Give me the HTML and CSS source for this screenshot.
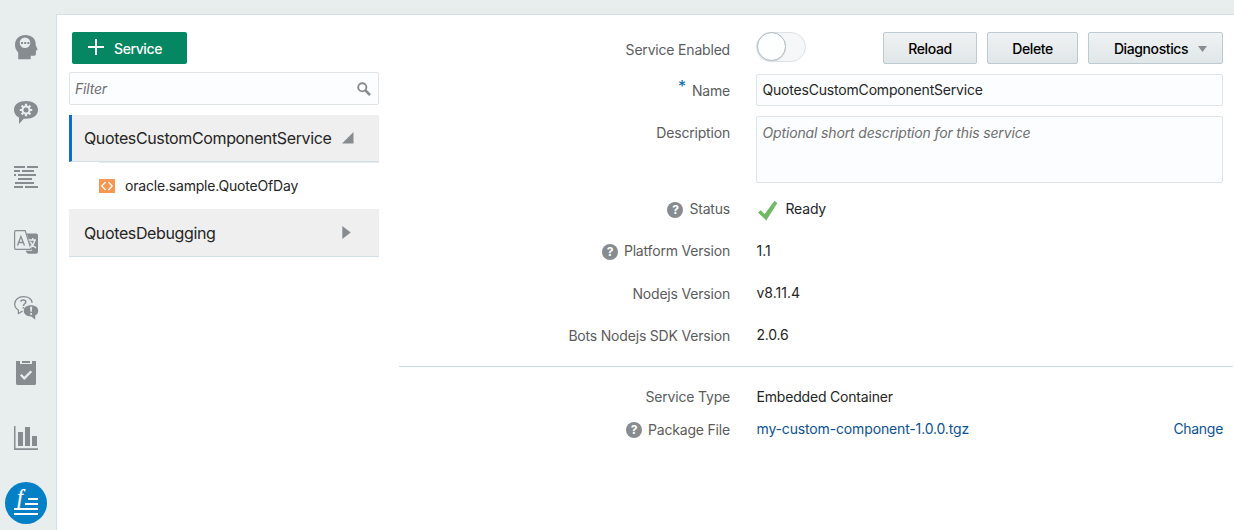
FILE: index.html
```html
<!DOCTYPE html>
<html lang="en">
<head>
<meta charset="utf-8">
<title>Custom Components</title>
<link rel="stylesheet" href="styles.css">
</head>
<body>
<div class="app">
  <nav class="rail">
    <a class="rail-item"><svg width="42" height="42" viewBox="0 0 42 42"><path class="ink" d="M13.2 33.2V26.5C10.8 24 10 21.500 10 18.800C10 12.800 14.500 9 20.300 9C26.500 9 30.700 12.800 30.700 17.800L30.800 19.500L32.500 23.300C32.500 24.200 31.900 24.500 30.900 24.500V27.700C30.900 29.300 30 29.700 28.800 29.700H25.700V33.200Z"/><circle class="bg" cx="20" cy="16.800" r="5.300"/><path class="ink" d="M16 16h2v2h-2zM19.200 16h2v2h-2zM22.400 16h2v2h-2z"/></svg></a>
    <a class="rail-item"><svg width="42" height="42" viewBox="0 0 42 42"><path class="ink" d="M21 10C27.500 10 33 12.800 33 18.800C33 24.800 27.500 27.800 21 27.800H18.700L14 33V26.500C11 25 9 22.500 9 18.800C9 12.800 14.500 10 21 10Z"/><g fill="none" stroke="#e8edee"><circle cx="21" cy="19" r="3.500" stroke-width="2"/><path stroke-width="2.200" d="M21 12.800v2.400M21 22.800v2.400M14.800 19h2.400M24.800 19h2.400M16.600 14.600l1.700 1.700M23.700 21.700l1.700 1.700M25.400 14.600l-1.700 1.700M18.300 21.700l-1.700 1.700"/></g></svg></a>
    <a class="rail-item"><svg width="42" height="42" viewBox="0 0 42 42"><path class="ink" d="M9 10h11v2H9zM22 10h11v2H22zM9 14h6v2H9zM17 14h12v2H17zM9 18h2v2H9zM13 18h18v2H13zM13 22h14v2H13zM10 26h19v2H10zM9 30h9v2H9zM20 30h13v2H20z"/></svg></a>
    <a class="rail-item"><svg width="42" height="42" viewBox="0 0 42 42"><path fill="none" stroke="#878c90" stroke-width="1.200" d="M11 9.600H20.200L26 28.400H11Q9.600 28.400 9.600 27V11Q9.600 9.600 11 9.600Z"/><path fill="none" stroke="#878c90" stroke-width="1.300" d="M12.500 24.500L15.900 15.500L19.500 24.500M13.600 21.500h4.700"/><path class="ink" d="M21.800 12.500H31Q33 12.500 33 14.500V30.700Q33 32.700 31 32.700H23.500Q21.600 32.700 21 30.600L20.700 29.700H27.200Z"/><path fill="none" stroke="#e8edee" stroke-width="1.300" d="M23.800 19H31M27.800 17V19M29.800 19.500C29 23 26.800 25.500 24.800 26.800M25.400 20.500C26.500 23.500 28.500 25.500 31 26.800"/></svg></a>
    <a class="rail-item"><svg width="42" height="42" viewBox="0 1 42 42"><path fill="none" stroke="#878c90" stroke-width="1.250" d="M17.500 25.100L13.400 27.500V24C11 22.700 9.700 20.500 9.700 18C9.700 13.500 13.500 10.700 18.500 10.700C23.500 10.700 26.500 13 27.200 16.800"/><path fill="none" stroke="#878c90" stroke-width="1.500" d="M15.800 15.600C16 13.400 20.800 13.400 20.800 16C20.800 17.900 18.400 17.600 18.400 20"/><path class="ink" d="M17.600 21h1.600v1.600h-1.600zM26 19.200C30.500 19.200 33.200 21.500 33.200 24.700C33.200 27 32 28.700 30.200 29.600V33.700L26.400 30.500C21.500 30.600 18.800 28 18.800 24.800C18.800 21.500 21.500 19.200 26 19.200Z"/><path class="bg" d="M25 20.800h2.200l-.4 5h-1.400zM25.200 27h1.800v1.800h-1.800z"/></svg></a>
    <a class="rail-item"><svg width="42" height="42" viewBox="0 0 42 42"><path class="ink" d="M11 9H15V12H27V9H31V31.500Q31 33 29.500 33H12.500Q11 33 11 31.500ZM17 9h8v2h-8z"/><path fill="none" stroke="#e8edee" stroke-width="2.300" d="M15.800 22.800L19.300 26.300L26.300 19.300"/></svg></a>
    <a class="rail-item"><svg width="42" height="42" viewBox="0 0 42 42"><path class="ink" d="M9 9h1.500v22.200H33V33H9zM13 15h5v14h-5zM20 10h5v19h-5zM27 19h5v10h-5z"/></svg></a>
    <a class="rail-item rail-item-active"><svg width="42" height="42" viewBox="0 0 42 42"><text class="fx" x="12.300" y="21.800">f</text><path fill="#fff" d="M23 16h10v2H23zM20 21h13v2H20zM9 26h24v2H9zM9 31h24v2H9z"/></svg></a>
  </nav>
  <main class="workspace">
    <section class="services">
      <button class="add"><svg width="16" height="16" viewBox="0 0 16 16"><path stroke="#fff" stroke-width="2" d="M8 0v16M0 8h16"/></svg><span>Service</span></button>
      <div class="filter"><em>Filter</em><svg width="14" height="14" viewBox="0 0 14 14"><circle cx="5.300" cy="5.300" r="4.100" fill="none" stroke="#878c90" stroke-width="1.900"/><path stroke="#878c90" stroke-width="2.600" d="M8.400 8.400L13 13"/></svg></div>
      <div class="service service-open"><span>QuotesCustomComponentService</span><svg width="12" height="12" viewBox="0 0 12 12"><path class="ink" d="M11.500 0V11.500H0Z"/></svg></div>
      <div class="component"><svg width="16" height="14" viewBox="0 0 16 14"><rect width="16" height="14" rx=".6" fill="#fb9650"/><path fill="none" stroke="#fff" stroke-width="1.300" d="M6.600 3L2.800 7L6.600 11M9.400 3L13.200 7L9.400 11"/></svg><span>oracle.sample.QuoteOfDay</span></div>
      <div class="service"><span>QuotesDebugging</span><svg class="closed" width="9" height="13" viewBox="0 0 9 13"><path class="ink" d="M.3 0L8.700 6.500L.3 13Z"/></svg></div>
    </section>
    <section class="details">
      <div class="row row-tools"><div class="label"><span>Service Enabled</span></div><div class="value"><span class="toggle"><span class="knob"></span></span><div class="buttons"><button class="btn reload">Reload</button><button class="btn delete">Delete</button><button class="btn diagnostics"><span>Diagnostics</span><svg width="9" height="6" viewBox="0 0 9 6"><path class="ink" d="M0 0H9L4.500 6Z"/></svg></button></div></div></div>
      <div class="row row-name"><div class="label"><span class="required">*</span><span>Name</span></div><div class="value input"><span>QuotesCustomComponentService</span></div></div>
      <div class="row row-description"><div class="label"><span>Description</span></div><div class="value input"><em class="hint">Optional short description for this service</em></div></div>
      <div class="row row-info"><div class="label"><span class="help">?</span><span>Status</span></div><div class="value"><svg class="check" width="21" height="21" viewBox="0 0 21 21"><path fill="#72b966" d="M1 12.500L3.800 10.200L7.700 14.100L17.500 .8L20.300 3L9.300 20.500Z"/></svg><span>Ready</span></div></div>
      <div class="row row-info"><div class="label"><span class="help">?</span><span>Platform Version</span></div><div class="value"><span class="digits">1.1</span></div></div>
      <div class="row row-info"><div class="label"><span>Nodejs Version</span></div><div class="value value-raised"><span class="digits">v8.11.4</span></div></div>
      <div class="row row-info"><div class="label"><span>Bots Nodejs SDK Version</span></div><div class="value value-raised"><span>2.0.6</span></div></div>
      <hr class="divider">
      <div class="row row-package"><div class="label"><span>Service Type</span></div><div class="value"><span>Embedded Container</span></div></div>
      <div class="row row-package"><div class="label"><span class="help">?</span><span>Package File</span></div><div class="value value-raised link"><span>my-custom-component-1.0.0.tgz</span><span class="change">Change</span></div></div>
    </section>
  </main>
</div>
</body>
</html>
```
FILE: styles.css
```css
* { box-sizing: border-box; }
body { margin: 0; font: 14px/20px Inter, "Liberation Sans", sans-serif; letter-spacing: -.19px; color: #252525; }
.app { display: flex; width: 1234px; height: 530px; overflow: hidden; background: #e8edee; }
.ink { fill: #878c90; }
.bg { fill: #e8edee; }
svg { display: block; flex: none; }
button { font: inherit; letter-spacing: inherit; cursor: pointer; }

.rail { display: flex; flex-direction: column; width: 56px; padding: 26px 0 0 5px; gap: 23.140px; flex: none; }
.rail-item { width: 42px; height: 42px; border-radius: 50%; flex: none; }
.rail-item-active { background: #0480c7; }
.fx { fill: #fff; stroke: #fff; stroke-width: .4px; font: italic 20px "Liberation Serif", serif; }

.workspace { display: flex; flex: 1; margin-top: 14px; padding: 17px 0 0 12px; border: solid #d3dfe6; border-width: 1px 0 0 1px; background: #fff; }
.services { width: 310px; flex: none; }
.add { display: flex; align-items: center; gap: 10px; width: 115px; height: 32px; margin-left: 3px; padding: 0 16px; border: 0; border-radius: 2px; background: #048762; color: #fff; font-weight: 500; letter-spacing: -.4px; }
.add svg { margin-top: -2px; }
.add span { padding-top: 2px; }
.filter { display: flex; align-items: center; justify-content: space-between; height: 33px; margin: 8px 0 10px; padding: 0 7px 0 5px; border: 1px solid #dfe4e7; border-radius: 2px; background: #fcfdfe; color: #6f6f6f; }
.service { display: flex; align-items: center; height: 48px; padding-left: 15px; border-bottom: 1px solid #d3dfe6; background: #efefef; font-size: 16px; letter-spacing: -.37px; }
.service-open { height: 47px; padding-left: 12px; border-left: 3px solid #0572ce; gap: 10.500px; }
.service .closed { margin-left: auto; margin-right: 28px; }
.component { display: flex; align-items: center; gap: 10px; height: 47px; margin-left: 30px; border-top: 1px solid #e5eaed; }

.details { width: 834px; margin-left: 20px; flex: none; }
.row { display: grid; grid-template-columns: 331px 467px; column-gap: 26px; }
.label { display: flex; align-items: center; justify-content: flex-end; color: #5c5c5c; }
.value { display: flex; align-items: center; }
.row-tools { height: 42px; }
.row-tools .label { height: 35px; }
.row-tools .value { align-items: flex-start; justify-content: space-between; }
.toggle { width: 50px; height: 30px; border: 1px solid #dce2e5; border-radius: 15px; background: #f5f7f8; }
.knob { display: block; width: 29px; height: 29px; margin: -1px 0 0 0; border: 1px solid #adb8bf; border-radius: 50%; background: #fdfefe; box-shadow: 0 1px 1px #dce2e5; }
.buttons { display: flex; gap: 10px; }
.btn { display: flex; align-items: center; justify-content: center; height: 32px; padding: 2px 0 0; border: 1px solid #bccad2; border-radius: 2px; background: linear-gradient(#eff2f3, #e0e6e8); color: #000; font-weight: 500; letter-spacing: -.4px; }
.reload { width: 94px; }
.delete { width: 91px; }
.diagnostics { width: 135px; gap: 10px; padding-left: 10px; }
.row-name { height: 42px; }
.row-name .label { height: 34px; gap: 6px; }
.required { align-self: flex-start; padding-top: 2px; color: #0469ad; font-size: 16px; }
.input { padding: 0 5.500px; border: 1px solid #dfe4e7; border-radius: 2px; background: #fcfdfe; }
.row-name .input { height: 32px; }
.row-description { height: 72px; }
.row-description .label { height: 34px; }
.row-description .input { height: 67px; align-items: flex-start; padding-top: 6px; color: #6f6f6f; }
.hint { letter-spacing: -.15px; }
.row-info { height: 42.250px; }
.row-info .label { gap: 6px; }
.row-info .help { margin-top: 1.500px; }
.row-info .value, .row-package .value { padding-left: .5px; }
.value-raised { padding-bottom: 2px; }
.digits { letter-spacing: 0; }
.help { width: 16px; height: 16px; border-radius: 50%; background: #878c90; color: #fff; font-size: 12px; font-weight: 700; line-height: 16px; text-align: center; }
.check { margin: 3px 8px 0 0; }
.divider { height: 1px; margin: 9px 0 14px; border: 0; background: #c9d9e1; }
.row-package { height: 32.500px; }
.row-package .label { gap: 6px; }
.link { justify-content: space-between; color: #0b5294; letter-spacing: -.15px; }
.change { letter-spacing: -.3px; }
```
